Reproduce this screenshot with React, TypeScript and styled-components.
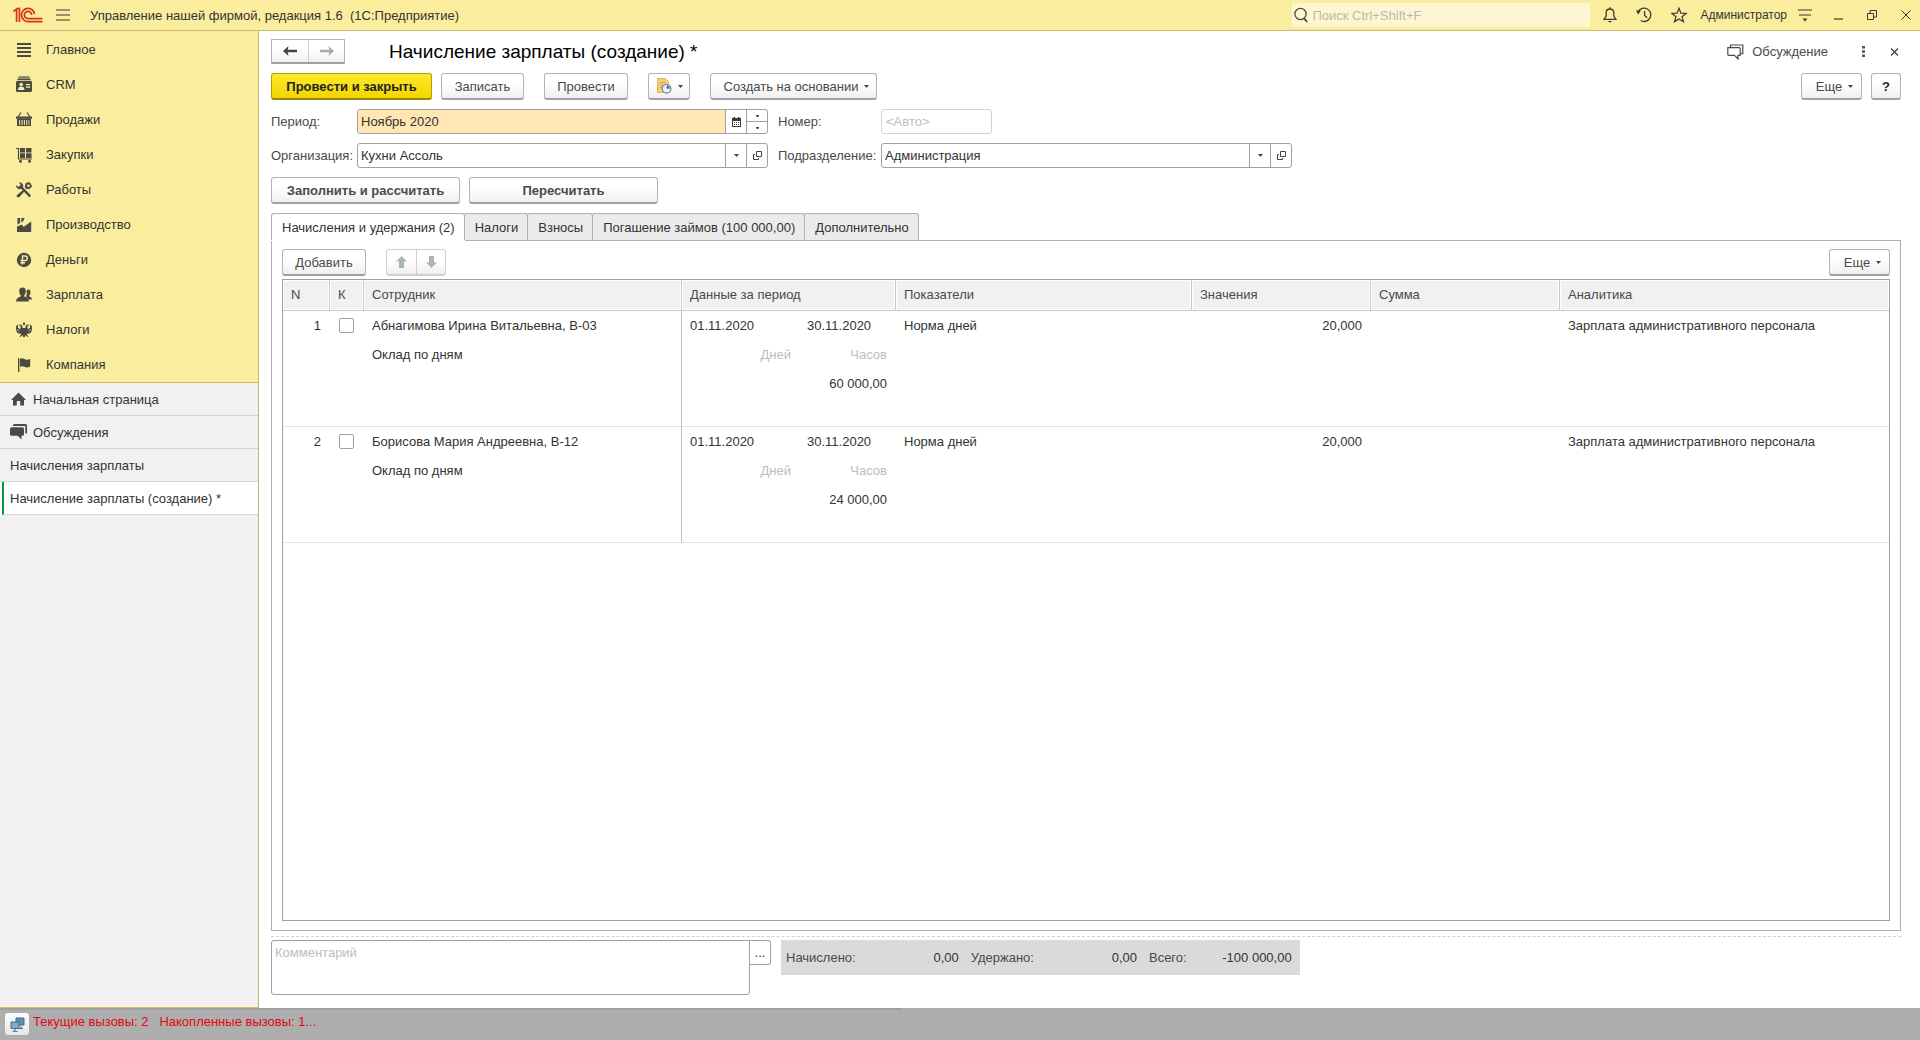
import React, { useState } from 'react';
import styled, { createGlobalStyle, css } from 'styled-components';

const FONT = '"Liberation Sans", Arial, sans-serif';
const YELLOW = '#fbed9e';
const LINE = '#a0a0a0';
const INK = '#4a4a4a';

const GlobalStyle = createGlobalStyle`
  *, *::before, *::after { box-sizing: border-box; }
  body { margin: 0; background: #fff; }
  body, button, input, select, textarea { font-family: ${FONT}; font-size: 13px; color: #333; }
  svg { display: block; flex: none; }
`;

const Page = styled.div`
  display: flex;
  flex-direction: column;
  min-height: 100vh;
`;

/* ---------- top bar ---------- */

const TopBar = styled.header`
  display: flex;
  align-items: center;
  height: 31px;
  padding: 0 9px 0 13px;
  background: ${YELLOW};
  border-bottom: 1px solid #c9bb72;
`;

const AppTitle = styled.div`
  flex: 1;
  padding-left: 20px;
  white-space: pre;
`;

const BareButton = styled.button`
  display: flex;
  align-items: center;
  justify-content: center;
  padding: 0;
  border: 0;
  background: none;
  cursor: pointer;
`;

const MenuButton = styled(BareButton)`
  margin-left: 13px;
`;

const Search = styled.label`
  display: flex;
  align-items: center;
  gap: 4px;
  width: 298px;
  height: 24px;
  padding-left: 2px;
  background: #fef6d3;
`;

const SearchInput = styled.input`
  flex: 1;
  min-width: 0;
  padding: 0;
  border: 0;
  outline: 0;
  background: none;
  &::placeholder { color: #bcb9a8; opacity: 1; }
`;

const TopActions = styled.div`
  display: flex;
  align-items: center;
  gap: 19px;
  margin-left: 13px;
`;

const User = styled(BareButton)`
  gap: 11px;
  margin-left: -6px;
  font-size: 12px;
`;

const WindowActions = styled.div`
  display: flex;
  align-items: center;
  gap: 24px;
  margin-left: 22px;
`;

/* ---------- sidebar ---------- */

const Body = styled.div`
  display: flex;
  flex: 1;
`;

const Sidebar = styled.aside`
  display: flex;
  flex-direction: column;
  flex: none;
  width: 259px;
  background: #f1f1f1;
  border-right: 1px solid #c5b76c;
  border-bottom: 1px solid #d8c04f;
`;

const Sections = styled.nav`
  padding-top: 1px;
  background: ${YELLOW};
  border-bottom: 1px solid #c9bb72;
`;

const SectionLink = styled.a`
  display: flex;
  align-items: center;
  gap: 13px;
  height: 35px;
  padding-left: 15px;
  color: #333;
  text-decoration: none;
`;

const OpenTab = styled.a<{ $active?: boolean }>`
  display: flex;
  align-items: center;
  gap: 6px;
  height: 33px;
  padding-left: 10px;
  color: #333;
  text-decoration: none;
  border-bottom: 1px solid #d4d4d4;
  ${(p) => p.$active && css`
    background: #fff;
    margin-left: 2px;
    padding-left: 6px;
    border-left: 2px solid #0c9347;
    box-shadow: -2px 0 0 #fff;
  `}
`;

/* ---------- form ---------- */

const Main = styled.main`
  display: flex;
  flex-direction: column;
  flex: 1;
  min-width: 0;
  padding: 8px 19px 13px 12px;
`;

const Row = styled.div<{ $gap?: number; $top?: number }>`
  display: flex;
  align-items: center;
  gap: ${(p) => p.$gap ?? 0}px;
  margin-top: ${(p) => p.$top ?? 0}px;
`;

const Spacer = styled.div`
  flex: 1;
`;

const raised = css`
  border: 1px solid #b4b4b4;
  border-bottom: 2px solid #a0a0a0;
  background: linear-gradient(#fff 40%, #efefef);
`;

const Button = styled.button<{ $bold?: boolean; $width?: number }>`
  display: flex;
  align-items: center;
  justify-content: center;
  gap: 6px;
  height: 27px;
  min-width: ${(p) => p.$width ?? 0}px;
  padding: 0 11px;
  ${raised}
  border-radius: 3px;
  color: ${INK};
  font-weight: ${(p) => (p.$bold ? 700 : 400)};
  white-space: nowrap;
  cursor: pointer;
`;

const MenuDropButton = styled(Button)`
  padding: 0 5px 0 11px;
`;

const PrimaryButton = styled(Button)`
  background: linear-gradient(#ffe92e, #f2d500);
  border-color: #b3a000;
  border-bottom-color: #97870a;
  color: #222;
`;

const IconButton = styled(Button)`
  padding: 0 6px;
`;

const HelpButton = styled(Button)`
  padding: 0;
  color: #222;
`;

const Pair = styled.div<{ $muted?: boolean }>`
  display: flex;
  ${raised}
  ${(p) => p.$muted && css`border-color: #cfcfcf; border-radius: 3px;`}
`;

const PairButton = styled(BareButton)<{ $w: number; $h: number }>`
  width: ${(p) => p.$w}px;
  height: ${(p) => p.$h}px;
  & + & { border-left: 1px solid #cfcfcf; }
`;

const Title = styled.h1`
  margin: 0 0 0 44px;
  font-size: 19px;
  font-weight: 400;
  line-height: 24px;
  color: #000;
`;

const Discussion = styled(BareButton)`
  gap: 8px;
  color: ${INK};
`;

const Fields = styled.div`
  display: grid;
  grid-template-columns: 86px minmax(200px, 411px) 113px minmax(200px, 411px);
  row-gap: 9px;
  margin-top: 9px;
  align-items: center;
`;

const Label = styled.label<{ $inset?: boolean }>`
  padding-left: ${(p) => (p.$inset ? 10 : 0)}px;
  color: ${INK};
  white-space: nowrap;
`;

const Field = styled.div`
  position: relative;
  display: flex;
  height: 25px;
  border: 1px solid ${LINE};
  border-radius: 3px;
  background: #fff;
  overflow: hidden;
`;

const control = css`
  flex: 1;
  min-width: 0;
  padding: 0 3px;
  border: 0;
  outline: 0;
  border-radius: 0;
`;

const PeriodInput = styled.input`
  ${control}
  background: #ffe6b3;
`;

const FieldSelect = styled.select`
  ${control}
  appearance: none;
  background: transparent;
`;

const NumberInput = styled.input`
  display: block;
  width: 111px;
  height: 25px;
  padding: 0 4px;
  border: 1px solid #d4d4d4;
  border-radius: 3px;
  outline: 0;
  &::placeholder { color: #bdbdbd; opacity: 1; }
`;

const SelectArrow = styled.span`
  position: absolute;
  top: 0;
  bottom: 0;
  right: 21px;
  display: flex;
  align-items: center;
  justify-content: center;
  width: 21px;
  border-left: 1px solid ${LINE};
  pointer-events: none;
`;

const FieldButton = styled(BareButton)`
  width: 21px;
  border-left: 1px solid ${LINE};
`;

const Stepper = styled.div`
  display: flex;
  flex-direction: column;
  width: 21px;
  border-left: 1px solid ${LINE};
`;

const StepButton = styled(BareButton)`
  flex: 1;
  & + & { border-top: 1px solid ${LINE}; }
`;

/* ---------- tabs and table ---------- */

const Tabs = styled.div`
  display: flex;
  margin-top: 9px;
`;

const Tab = styled.button<{ $active: boolean }>`
  height: 27px;
  padding: 0 9px 0 10px;
  border: 1px solid #b0b0b0;
  border-bottom: 0;
  border-radius: 3px 3px 0 0;
  background: ${(p) => (p.$active ? '#fff' : '#ebebeb')};
  white-space: nowrap;
  cursor: pointer;
  & + & { margin-left: -1px; }
  ${(p) => p.$active && css`
    position: relative;
    box-shadow: 0 1px 0 #fff;
  `}
`;

const Panel = styled.section`
  display: flex;
  flex-direction: column;
  flex: 1;
  padding: 8px 10px 9px;
  border: 1px solid #b0b0b0;
`;

const TableFrame = styled.div`
  flex: 1;
  margin-top: 3px;
  border: 1px solid ${LINE};
`;

const Table = styled.table`
  width: 100%;
  table-layout: fixed;
  border-collapse: separate;
  border-spacing: 0;
`;

const Th = styled.th`
  height: 31px;
  padding: 0 8px 2px;
  background: #f1f1f1;
  border-bottom: 1px solid #c8c8c8;
  box-shadow: inset 0 0 0 1px #fff;
  color: ${INK};
  font-weight: 400;
  text-align: left;
  & + & { border-left: 1px solid #c8c8c8; }
`;

const Td = styled.td<{ $line?: boolean; $right?: boolean }>`
  height: 116px;
  padding: 0 8px;
  border-bottom: 1px solid #e2e2e2;
  border-left: ${(p) => (p.$line ? '1px solid #c0c0c0' : '0')};
  line-height: 29px;
  text-align: ${(p) => (p.$right ? 'right' : 'left')};
  vertical-align: top;
  white-space: nowrap;
  overflow: hidden;
`;

const TextCell = styled(Td)`
  padding-left: 9px;
`;

const CheckCell = styled(Td)`
  padding: 7px 0 0 10px;
  line-height: 15px;
`;

const Check = styled.input`
  display: block;
  appearance: none;
  width: 15px;
  height: 15px;
  margin: 0;
  border: 1px solid ${LINE};
  border-radius: 2px;
  background: #fff;
  &:checked { background: #8a8a8a; }
`;

const PeriodGrid = styled.div`
  display: grid;
  grid-template-columns: 101px 96px;
`;

const PeriodEnd = styled.div`
  padding-left: 16px;
`;

const Hint = styled.div`
  color: #bdbdbd;
  text-align: right;
`;

const Amount = styled.div`
  grid-column: 1 / 3;
  text-align: right;
`;

/* ---------- footer ---------- */

const Divider = styled.hr`
  width: 100%;
  margin: 5px 0 3px;
  border: 0;
  border-top: 1px dashed #d0d0d0;
`;

const Footer = styled.div`
  display: flex;
  align-items: flex-start;
`;

const Comment = styled.textarea`
  width: 479px;
  height: 55px;
  padding: 4px 3px;
  border: 1px solid ${LINE};
  border-radius: 3px 0 3px 3px;
  outline: 0;
  resize: none;
  &::placeholder { color: #bdbdbd; opacity: 1; }
`;

const CommentButton = styled(BareButton)`
  width: 21px;
  height: 25px;
  border: 1px solid ${LINE};
  border-left: 0;
  border-radius: 0 3px 3px 0;
  background: #fff;
`;

const Totals = styled.dl`
  display: flex;
  align-items: center;
  height: 35px;
  margin: 0 0 0 10px;
  padding: 0 8px 0 5px;
  background: #dadada;
`;

const TotalName = styled.dt`
  color: ${INK};
`;

const TotalValue = styled.dd<{ $w: number; $last?: boolean }>`
  width: ${(p) => p.$w}px;
  margin: 0 ${(p) => (p.$last ? 0 : 12)}px 0 0;
  text-align: right;
`;

const StatusBar = styled.footer`
  display: flex;
  align-items: center;
  gap: 4px;
  height: 32px;
  padding: 0 5px;
  background: linear-gradient(#a0a0a0, #a0a0a0) 0 0 / 47% 2px no-repeat, #aeaeae;
  color: #e30613;
`;

const StatusButton = styled(BareButton)`
  width: 24px;
  height: 22px;
  border-radius: 3px;
  background: linear-gradient(#fff, #e6e6e6);
`;

const StatusText = styled.span`
  padding-bottom: 5px;
  white-space: pre;
`;

/* ---------- icons ---------- */

const Logo = () => (
  <svg width="30" height="16" viewBox="0 0 30 16" fill="none" stroke="#d8321f" strokeWidth="1.7">
    <path d="M.4 4.6 3.6 2V15" />
    <path d="M6.4.6V15" />
    <path d="M3.4 1.5H7" strokeWidth="1.2" />
    <path d="M21.6 7A6.6 6.6 0 1 0 15.2 14.6H29.5" />
    <path d="M18.6 8A3.6 3.6 0 1 0 15.2 11.6H29.5" />
  </svg>
);

const Stroke = ({ w, h, d, sw = 1.2, color = '#3c3a30' }: { w: number; h: number; d: string; sw?: number; color?: string }) => (
  <svg width={w} height={h} viewBox={`0 0 ${w} ${h}`} fill="none" stroke={color} strokeWidth={sw}>
    <path d={d} />
  </svg>
);

const Triangle = () => (
  <svg width="5" height="3" viewBox="0 0 5 3" fill="#444"><path d="M0 0h5L2.5 3z" /></svg>
);

const Dot = () => (
  <svg width="3" height="2" viewBox="0 0 3 2" fill="#444"><path d="M0 0h3v1L2 2H1L0 1z" /></svg>
);

const BellIcon = () => (
  <svg width="14" height="16" viewBox="0 0 14 16" fill="none" stroke="#3c3a30" strokeWidth="1.3">
    <path d="M1 12.3h12L10.8 9V5.6C10.8 3.4 9.3 2 7 2S3.2 3.4 3.2 5.6V9zM7 .3V2" />
    <path d="M5 14h4l-2 1.8z" fill="#3c3a30" stroke="none" />
  </svg>
);

const HistoryIcon = () => (
  <svg width="16" height="16" viewBox="0 0 16 16" fill="none" stroke="#3c3a30" strokeWidth="1.3">
    <path d="M2.2 4.6A6.7 6.7 0 1 1 4.6 13.5M8.6 4v4.4l2.6 2.4" />
    <path d="M0 3.6h5L2.2 7.4z" fill="#3c3a30" stroke="none" />
  </svg>
);

const StarIcon = () => (
  <svg width="16" height="16" viewBox="0 0 16 16" fill="none" stroke="#3c3a30" strokeWidth="1.2">
    <path d="M8 1.2 9.9 6.2l5.2.2-4.1 3.3 1.5 5.1L8 11.9l-4.5 2.9L5 9.7.9 6.4l5.2-.2z" />
  </svg>
);

const ServiceIcon = () => (
  <svg width="14" height="13" viewBox="0 0 14 13" fill="none" stroke="#3c3a30" strokeWidth="1.2">
    <path d="M0 1h14M1 6h12" />
    <path d="M4.5 9.5h5L7 12.5z" fill="#3c3a30" stroke="none" />
  </svg>
);

const SearchIcon = () => (
  <svg width="14" height="16" viewBox="0 0 14 16" fill="none" stroke="#4a4838" strokeWidth="1.3">
    <circle cx="6.5" cy="7" r="5.6" /><path d="M10 11.4 13.2 15" strokeWidth="1.8" />
  </svg>
);

const DiscussIcon = () => (
  <svg width="17" height="16" viewBox="0 0 17 16" fill="none" stroke="#4a4a4a" strokeWidth="1.2">
    <path d="M3.5 3.6V1H15.8V9.6H13.4" />
    <path d="M.8 3.7H12.2Q13.2 3.7 13.2 4.7V11.3H11v3.6L7.4 11.3H1.8Q.8 11.3.8 10.3z" />
  </svg>
);

const ArrowIcon = ({ color, flip }: { color: string; flip?: boolean }) => (
  <svg width="14" height="10" viewBox="0 0 14 10" fill={color}>
    <path d={flip ? 'M14 5 8.5 0 9.3 3.8H0V6.2H9.3L8.5 10z' : 'M0 5 5.5 0 4.7 3.8H14V6.2H4.7L5.5 10z'} />
  </svg>
);

const MoveIcon = ({ down }: { down?: boolean }) => (
  <svg width="11" height="12" viewBox="0 0 11 12" fill="#a9b5bb">
    <path d={down ? 'M5.5 12 0 6.5h3V0h5v6.5h3z' : 'M5.5 0 11 5.5H8V12H3V5.5H0z'} />
  </svg>
);

const ReportIcon = () => (
  <svg width="16" height="16" viewBox="0 0 16 16">
    <path d="M1.5.5h8l3 3v10.9h-11z" fill="#f3d27a" stroke="#dcb458" />
    <path d="M3.5 4.5h6M3.5 7h4M3.5 9.5h3" stroke="#cfa548" />
    <circle cx="10.6" cy="10.8" r="4.3" fill="#eef3fa" stroke="#6a82ad" strokeWidth="1.2" />
    <path d="M10.6 10.8V7.6a3.2 3.2 0 0 1 3.2 3.2z" fill="#4a6699" />
  </svg>
);

const CalendarIcon = () => (
  <svg width="9" height="10" viewBox="0 0 9 10" fill="#3a3a3a">
    <path d="M0 1h1.5V0H3v1h3V0h1.5v1H9v9H0zM1 4v5h7V4z" fillRule="evenodd" />
    <path d="M2 5h1v1H2zM4 5h1v1H4zM6 5h1v1H6zM2 7h1v1H2zM4 7h1v1H4zM6 7h1v1H6z" />
  </svg>
);

const OpenIcon = () => (
  <svg width="9" height="9" viewBox="0 0 9 9" fill="none" stroke="#444">
    <path d="M3.5.5h5v5h-5zM2 3.5H.5v5h5V7" />
  </svg>
);

const NetworkIcon = () => (
  <svg width="15" height="15" viewBox="0 0 15 15">
    <path d="M6 1h8v7H6z" fill="#5d8fb3" stroke="#4b6c84" />
    <path d="M11 9v2M8.5 11.5H13" stroke="#4b6c84" />
    <path d="M1 5h8v6.5H1z" fill="#78acd0" stroke="#4b6c84" />
    <path d="M5 12v2M2.5 14.3h5" stroke="#4b6c84" />
  </svg>
);

const G = '#4b4a42';
const Solid = ({ children }: { children: React.ReactNode }) => (
  <svg width="18" height="18" viewBox="0 0 18 18" fill={G}>{children}</svg>
);

const icons: Record<string, React.ReactNode> = {
  main: <Solid><path d="M2 2h14v2H2zM2 6h14v2H2zM2 10h14v2H2zM2 14h14v2H2z" /></Solid>,
  crm: (
    <Solid>
      <path d="M3.5.5h11v1.2h-11zM2.5 2.5h13V4h-13zM2.5 4.8h13Q17 4.8 17 6.3v8.2q0 1.5-1.5 1.5h-13Q1 16 1 14.5V6.3Q1 4.8 2.5 4.8z" />
      <g fill={YELLOW}>
        <circle cx="6.2" cy="8.5" r="1.8" />
        <path d="M3 14q0-3 2-3.2h2.4q2 .2 2 3.2zM11 8h4.2v1.2H11zM11 10.5h4.2v1.2H11z" />
      </g>
    </Solid>
  ),
  sales: (
    <Solid>
      <path d="M6 1.5 3 6M12 1.5l3 4.5" stroke={G} strokeWidth="1.2" />
      <path d="M1 5.5h16v2.2H1z" />
      <path d="M2 7.5h14V15H2zM4.2 9V14h1V9zM6.6 9V14h1V9zM8.900 9V14h1V9zM11.2 9V14h1V9zM13.500 9V14h.8V9z" fillRule="evenodd" />
    </Solid>
  ),
  purchases: (
    <Solid>
      <path d="M1 2.5h2.5V13H17" fill="none" stroke={G} strokeWidth="1.2" />
      <path d="M5 2h5v4.5H5zM11 2h5.5v4.5H11zM5 7.3h5V12H5zM11 7.3h5.5V12H11z" />
      <circle cx="5.5" cy="15.2" r="1.5" /><circle cx="14.5" cy="15.2" r="1.5" />
    </Solid>
  ),
  works: (
    <Solid>
      <path d="M4 1.5a3.5 3.5 0 0 1 4 4.7L16 14.5 14.5 16.5 6.2 7.8A3.5 3.5 0 0 1 1.2 4l2.3 1.9L5.6 4z" />
      <path d="M10.5 2.5Q13 .5 15.5 2L17 5.5 14.5 8l-3.7-.2-1-2zM9 8.2 10.2 9.4 4 16.5 1.5 15.8 2 14z" />
      <circle cx="13.5" cy="4.8" r="1.3" fill={YELLOW} />
    </Solid>
  ),
  production: (
    <Solid>
      <path d="M2 10.5 7 8.5 8.5 11 16.2 5.5V16H2z" />
      <path d="M2.5 2h2.7L5 7 2.5 8.5zM6.5 2h3L8 5.5 6.2 6.5z" />
    </Solid>
  ),
  money: (
    <Solid>
      <circle cx="9" cy="9" r="7.2" />
      <path d="M7.5 13.5V5H10a2.2 2.2 0 0 1 0 4.500H5.5M5.5 11.7H10" fill="none" stroke={YELLOW} strokeWidth="1.4" />
    </Solid>
  ),
  salary: (
    <Solid>
      <path d="M12.5 3.5q3-.5 3 3 0 2-1.2 3v1q2.7.5 2.700 3h-3.500L11 10.5q1.500-2 .5-5z" />
      <path d="M7.5 1.5q3.5 0 3.300 4-.2 2.500-1.500 3.800v1.200q4.500 1 4.700 5H1q.2-4 4.700-5V9.300Q4.400 8 4.200 5.500q-.2-4 3.300-4z" />
    </Solid>
  ),
  taxes: (
    <Solid>
      <path d="M9 4.500 7.800 3.200 8.300 1.500h1.400l.5 1.700zM7.500 5 5 3.200l-1.200.8L5.500 5v2.200L4.500 8 3 6.500V3.200L1.200 5 1 8l1 3.500 2.300 1.300 1.700-.5-.5 2.200-1.500 1.200 2.500-.2.8-1.500L9 17l1.700-3 .8 1.500 2.500.2-1.500-1.200-.5-2.200 1.700.5L16 11.500 17 8l-.2-3L15 3.200v3.300L13.500 8l-1-.8V5l1.700-1-1.200-.8L10.500 5v2h-3z" />
      <path d="M2.500 8.500l2 1.500M15.500 8.500l-2 1.500" stroke={YELLOW} strokeWidth=".7" fill="none" />
    </Solid>
  ),
  company: (
    <Solid>
      <path d="M3 2h1.400v14H3z" />
      <path d="M5 3Q7 1.600 9.200 3t6 0v7.500q-3.200 1.600-5.700.3t-4.500 0z" />
    </Solid>
  ),
};

const HomeIcon = () => (
  <svg width="17" height="16" viewBox="0 0 17 16" fill={G}>
    <path d="M8.5 1.5 16 9h-2v5.500h-3.800V10H6.800v4.500H3V9H1z" />
  </svg>
);

const ChatIcon = () => (
  <svg width="17" height="16" viewBox="0 0 17 16" fill={G}>
    <path d="M4 0h11.500Q17 0 17 1.500V9.500h-1.700V2H3Q3 0 4 0z" />
    <path d="M1.500 3.200h11q1.500 0 1.500 1.500v5.500q0 1.500-1.500 1.500H11.500V15.500L7.700 11.700H1.500Q0 11.700 0 10.200V4.700q0-1.500 1.500-1.500z" />
  </svg>
);

/* ---------- data ---------- */

const sections = [
  ['main', 'Главное'], ['crm', 'CRM'], ['sales', 'Продажи'], ['purchases', 'Закупки'], ['works', 'Работы'],
  ['production', 'Производство'], ['money', 'Деньги'], ['salary', 'Зарплата'], ['taxes', 'Налоги'], ['company', 'Компания'],
];

const tabs = ['Начисления и удержания (2)', 'Налоги', 'Взносы', 'Погашение займов (100 000,00)', 'Дополнительно'];

const columns: [string, number | undefined][] = [
  ['N', 46], ['К', 34], ['Сотрудник', 318], ['Данные за период', 214], ['Показатели', 296],
  ['Значения', 179], ['Сумма', 189], ['Аналитика', undefined],
];

const rows = [
  { n: 1, name: 'Абнагимова Ирина Витальевна, В-03', amount: '60 000,00' },
  { n: 2, name: 'Борисова Мария Андреевна, В-12', amount: '24 000,00' },
];

export default function App() {
  const [tab, setTab] = useState(0);
  return (
    <Page>
      <GlobalStyle />
      <TopBar>
        <Logo />
        <MenuButton aria-label="Меню"><Stroke w={14} h={12} d="M0 1h14M0 6h14M0 11h14" /></MenuButton>
        <AppTitle>Управление нашей фирмой, редакция 1.6  (1С:Предприятие)</AppTitle>
        <Search>
          <SearchIcon />
          <SearchInput type="search" aria-label="Поиск" placeholder="Поиск Ctrl+Shift+F" />
        </Search>
        <TopActions>
          <BareButton aria-label="Оповещения"><BellIcon /></BareButton>
          <BareButton aria-label="История"><HistoryIcon /></BareButton>
          <BareButton aria-label="Избранное"><StarIcon /></BareButton>
          <User>Администратор<ServiceIcon /></User>
        </TopActions>
        <WindowActions>
          <BareButton aria-label="Свернуть"><Stroke w={9} h={10} d="M0 9h9" /></BareButton>
          <BareButton aria-label="Восстановить"><Stroke w={10} h={10} sw={1} d="M.5 3.5h6v6h-6zM3 3V.5h6.5V7H7" /></BareButton>
          <BareButton aria-label="Закрыть"><Stroke w={10} h={10} sw={1} d="M.5.5l9 9M9.5.5l-9 9" /></BareButton>
        </WindowActions>
      </TopBar>

      <Body>
        <Sidebar>
          <Sections>
            {sections.map(([key, name]) => (
              <SectionLink key={key} href="#">{icons[key]}{name}</SectionLink>
            ))}
          </Sections>
          <OpenTab href="#"><HomeIcon />Начальная страница</OpenTab>
          <OpenTab href="#"><ChatIcon />Обсуждения</OpenTab>
          <OpenTab href="#">Начисления зарплаты</OpenTab>
          <OpenTab href="#" $active>Начисление зарплаты (создание) *</OpenTab>
        </Sidebar>

        <Main>
          <Row>
            <Pair>
              <PairButton $w={36} $h={22} aria-label="Назад"><ArrowIcon color="#444" /></PairButton>
              <PairButton $w={36} $h={22} aria-label="Вперед"><ArrowIcon color="#a8a8a8" flip /></PairButton>
            </Pair>
            <Title>Начисление зарплаты (создание) *</Title>
            <Spacer />
            <Row $gap={34}>
              <Discussion><DiscussIcon />Обсуждение</Discussion>
              <Row $gap={25}>
                <BareButton aria-label="Действия">
                  <svg width="3" height="11" viewBox="0 0 3 11" fill="#555"><path d="M0 0h3v2.5H0zM0 4.2h3v2.5H0zM0 8.5h3V11H0z" /></svg>
                </BareButton>
                <BareButton aria-label="Закрыть форму"><Stroke w={11} h={8} color="#444" sw={1.3} d="M1 .5l7 7M8 .5l-7 7" /></BareButton>
              </Row>
            </Row>
          </Row>

          <Row $top={9}>
            <Row $gap={9}>
              <PrimaryButton $bold $width={161}>Провести и закрыть</PrimaryButton>
              <Row $gap={20}>
                <Button $width={83}>Записать</Button>
                <Button $width={84}>Провести</Button>
                <IconButton $width={42} aria-label="Отчеты"><ReportIcon /><Triangle /></IconButton>
                <MenuDropButton $width={167}>Создать на основании<Triangle /></MenuDropButton>
              </Row>
            </Row>
            <Spacer />
            <Row $gap={9}>
              <MenuDropButton $width={61}>Еще<Triangle /></MenuDropButton>
              <HelpButton $bold $width={30}>?</HelpButton>
            </Row>
          </Row>

          <Fields>
            <Label htmlFor="period">Период:</Label>
            <Field>
              <PeriodInput id="period" defaultValue="Ноябрь 2020" />
              <FieldButton aria-label="Календарь"><CalendarIcon /></FieldButton>
              <Stepper>
                <StepButton aria-label="Больше"><Dot /></StepButton>
                <StepButton aria-label="Меньше"><Dot /></StepButton>
              </Stepper>
            </Field>
            <Label htmlFor="number" $inset>Номер:</Label>
            <NumberInput id="number" placeholder="<Авто>" />

            <Label htmlFor="org">Организация:</Label>
            <Field>
              <FieldSelect id="org"><option>Кухни Ассоль</option></FieldSelect>
              <SelectArrow><Triangle /></SelectArrow>
              <FieldButton aria-label="Открыть организацию"><OpenIcon /></FieldButton>
            </Field>
            <Label htmlFor="dept" $inset>Подразделение:</Label>
            <Field>
              <FieldSelect id="dept"><option>Администрация</option></FieldSelect>
              <SelectArrow><Triangle /></SelectArrow>
              <FieldButton aria-label="Открыть подразделение"><OpenIcon /></FieldButton>
            </Field>
          </Fields>

          <Row $gap={9} $top={9}>
            <Button $bold $width={189}>Заполнить и рассчитать</Button>
            <Button $bold $width={189}>Пересчитать</Button>
          </Row>

          <Tabs role="tablist">
            {tabs.map((t, i) => (
              <Tab key={t} role="tab" aria-selected={i === tab} $active={i === tab} onClick={() => setTab(i)}>{t}</Tab>
            ))}
          </Tabs>

          <Panel>
            <Row $gap={20}>
              <Button $width={84}>Добавить</Button>
              <Pair $muted>
                <PairButton $w={29} $h={24} aria-label="Вверх"><MoveIcon /></PairButton>
                <PairButton $w={29} $h={24} aria-label="Вниз"><MoveIcon down /></PairButton>
              </Pair>
              <Spacer />
              <MenuDropButton $width={61}>Еще<Triangle /></MenuDropButton>
            </Row>

            <TableFrame>
              <Table>
                <colgroup>
                  {columns.map(([name, w]) => <col key={name} width={w} />)}
                </colgroup>
                <thead>
                  <tr>{columns.map(([name]) => <Th key={name} scope="col">{name}</Th>)}</tr>
                </thead>
                <tbody>
                  {rows.map((r) => (
                    <tr key={r.n}>
                      <Td $right>{r.n}</Td>
                      <CheckCell><Check type="checkbox" aria-label={r.name} /></CheckCell>
                      <TextCell>{r.name}<br />Оклад по дням</TextCell>
                      <Td $line>
                        <PeriodGrid>
                          <div>01.11.2020</div>
                          <PeriodEnd>30.11.2020</PeriodEnd>
                          <Hint>Дней</Hint>
                          <Hint>Часов</Hint>
                          <Amount>{r.amount}</Amount>
                        </PeriodGrid>
                      </Td>
                      <TextCell>Норма дней</TextCell>
                      <Td $right>20,000</Td>
                      <Td />
                      <TextCell>Зарплата административного персонала</TextCell>
                    </tr>
                  ))}
                </tbody>
              </Table>
            </TableFrame>
          </Panel>

          <Divider />
          <Footer>
            <Comment aria-label="Комментарий" placeholder="Комментарий" />
            <CommentButton aria-label="Открыть комментарий">...</CommentButton>
            <Totals>
              <TotalName>Начислено:</TotalName>
              <TotalValue $w={103}>0,00</TotalValue>
              <TotalName>Удержано:</TotalName>
              <TotalValue $w={103}>0,00</TotalValue>
              <TotalName>Всего:</TotalName>
              <TotalValue $w={105} $last>-100 000,00</TotalValue>
            </Totals>
          </Footer>
        </Main>
      </Body>

      <StatusBar>
        <StatusButton aria-label="Вызовы сервера"><NetworkIcon /></StatusButton>
        <StatusText>Текущие вызовы: 2   Накопленные вызовы: 1...</StatusText>
      </StatusBar>
    </Page>
  );
}
